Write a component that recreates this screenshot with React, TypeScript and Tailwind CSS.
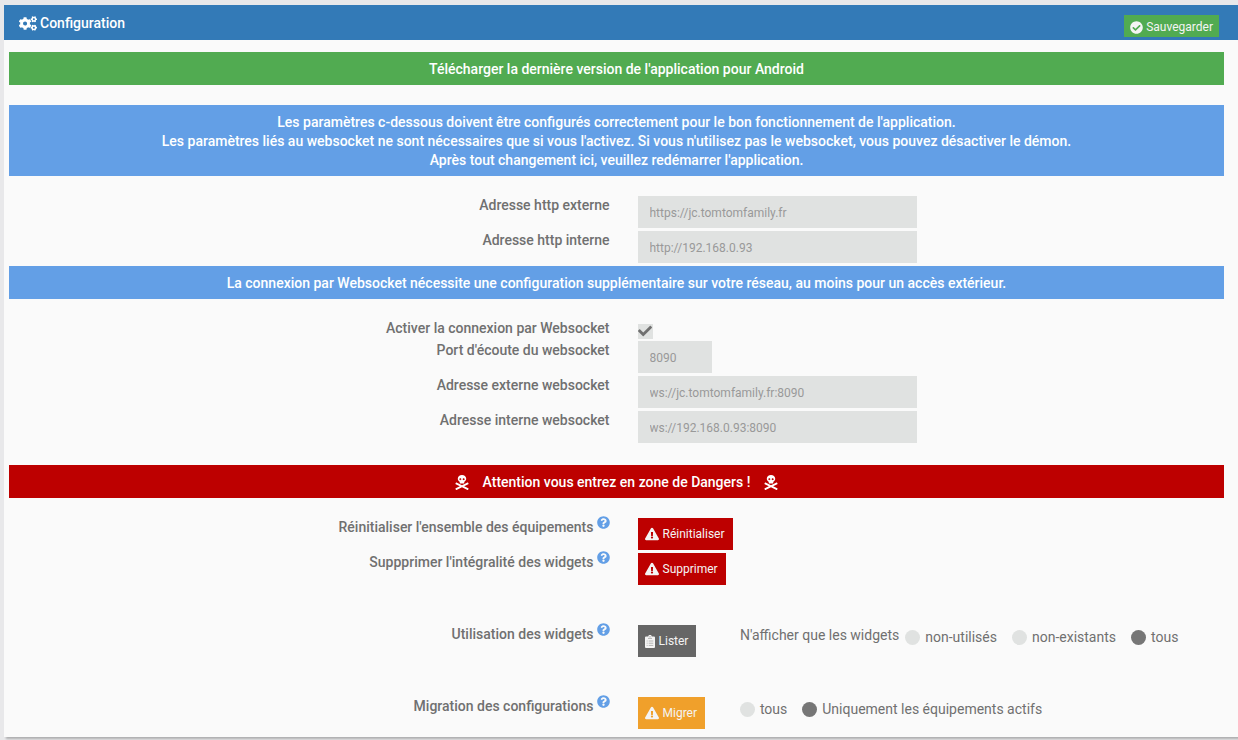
import type { ReactNode } from "react";
import {
  FaCheck,
  FaCheckCircle,
  FaCogs,
  FaExclamationTriangle,
  FaQuestionCircle,
  FaSkullCrossbones,
} from "react-icons/fa";

function ClipboardIcon() {
  return (
    <svg viewBox="0 0 10 13" className="h-[13px] w-2.5" aria-hidden="true">
      <path
        fill="currentColor"
        d="M1 1.6h2.3a1.7 1.7 0 0 1 3.4 0H9a1 1 0 0 1 1 1V12a1 1 0 0 1-1 1H1a1 1 0 0 1-1-1V2.6a1 1 0 0 1 1-1z"
      />
      <path stroke="#666" strokeOpacity="0.5" strokeWidth="0.9" d="M3 3.4h4M1.7 6h.9M3.7 6h4.6M1.7 8.2h.9M3.7 8.2h4.6M1.7 10.4h.9M3.7 10.4h4.6" />
      <circle cx="5" cy="1.7" r="0.5" fill="#666" />
    </svg>
  );
}

function Banner({ tone, children }: { tone: string; children: ReactNode }) {
  return (
    <div className={`mr-3.5 px-2 pt-2 pb-1.5 text-center font-medium text-white ${tone}`}>{children}</div>
  );
}

function Help({ title }: { title: string }) {
  return (
    <button type="button" aria-label={title} className="-mt-0.5 text-[#639fe6]">
      <FaQuestionCircle className="size-[13px]" />
    </button>
  );
}

function Row({
  label,
  htmlFor,
  help,
  children,
}: {
  label: string;
  htmlFor: string;
  help?: boolean;
  children: ReactNode;
}) {
  return (
    <div className="grid grid-cols-12">
      <div className="col-span-6 flex h-[19px] items-start justify-end gap-[3px] px-3.5 font-medium">
        <label htmlFor={htmlFor}>{label}</label>
        {help && <Help title={`Aide : ${label}`} />}
      </div>
      {children}
    </div>
  );
}

function TextField({ id, value, span }: { id: string; value: string; span: string }) {
  return (
    <div className={`px-3.5 ${span}`}>
      <input
        id={id}
        type="text"
        defaultValue={value}
        className="h-8 w-full bg-[#e0e2e1] px-3 pt-0.5 text-xs text-[#999] outline-none"
      />
    </div>
  );
}

function ActionButton({
  id,
  tone,
  icon,
  children,
}: {
  id: string;
  tone: string;
  icon: ReactNode;
  children: ReactNode;
}) {
  return (
    <div className="px-3.5">
      <button
        id={id}
        type="button"
        className={`flex h-8 items-center gap-[3px] px-2 text-xs whitespace-nowrap text-[#f4f4f4] ${tone}`}
      >
        <span className="-ml-px pr-px">{icon}</span>
        {children}
      </button>
    </div>
  );
}

function Radio({ name, label, checked }: { name: string; label: string; checked?: boolean }) {
  return (
    <label className="flex items-center gap-[5px] whitespace-nowrap">
      <input
        type="radio"
        name={name}
        defaultChecked={checked}
        className="size-[15px] appearance-none rounded-full bg-[#e0e2e1] checked:bg-[#767676]"
      />
      {label}
    </label>
  );
}

export default function App() {
  return (
    <div className="min-h-screen bg-[#e8e8ea] pt-[5px] pb-[3px] pl-1 font-[Roboto,sans-serif] text-sm leading-[19px] text-[#707070]">
      <main className="bg-[#fafafa] pb-2 shadow-[2px_2px_2px_rgba(0,0,0,0.25)]">
        <header className="flex h-[35px] items-start justify-between bg-[#337ab7] pr-[19px] pl-[15px] text-white">
          <h1 className="flex items-center gap-[3px] pt-[9px] font-medium">
            <FaCogs className="h-[15px] w-[18px]" />
            Configuration
          </h1>
          <button
            type="button"
            className="mt-2.5 flex h-[22px] items-center gap-[3px] bg-[#51ab51] px-1.5 pt-0.5 text-xs text-[#f4f4f4]"
          >
            <FaCheckCircle className="size-[13px]" />
            Sauvegarder
          </button>
        </header>

        <form className="pt-3 pl-[5px]">
          <Banner tone="bg-[#51ab51]">
            <a href="#android">Télécharger la dernière version de l'application pour Android</a>
          </Banner>

          <div className="mt-5">
            <Banner tone="bg-[#639fe6]">
              <p>Les paramètres c-dessous doivent être configurés correctement pour le bon fonctionnement de l'application.</p>
              <p>
                Les paramètres liés au websocket ne sont nécessaires que si vous l'activez. Si vous n'utilisez pas le
                websocket, vous pouvez désactiver le démon.
              </p>
              <p>Après tout changement ici, veuillez redémarrer l'application.</p>
            </Banner>
          </div>

          <div className="mt-5 mb-[3px] flex flex-col gap-[3px]">
            <Row label="Adresse http externe" htmlFor="http-ext">
              <TextField id="http-ext" value="https://jc.tomtomfamily.fr" span="col-span-3" />
            </Row>
            <Row label="Adresse http interne" htmlFor="http-int">
              <TextField id="http-int" value="http://192.168.0.93" span="col-span-3" />
            </Row>
          </div>

          <Banner tone="bg-[#639fe6]">
            La connexion par Websocket nécessite une configuration supplémentaire sur votre réseau, au moins pour un
            accès extérieur.
          </Banner>

          <div className="mt-5 flex flex-col gap-[3px]">
            <Row label="Activer la connexion par Websocket" htmlFor="ws-on">
              <div className="px-3.5 pt-[5px]">
                <div className="relative -mb-1 size-[15px]">
                  <input
                    id="ws-on"
                    type="checkbox"
                    defaultChecked
                    className="peer block size-[15px] appearance-none bg-[#e0e2e1]"
                  />
                  <FaCheck className="pointer-events-none absolute inset-0 hidden size-3.5 text-[#707070] peer-checked:block" />
                </div>
              </div>
            </Row>
            <Row label="Port d'écoute du websocket" htmlFor="ws-port">
              <TextField id="ws-port" value="8090" span="col-span-1" />
            </Row>
            <Row label="Adresse externe websocket" htmlFor="ws-ext">
              <TextField id="ws-ext" value="ws://jc.tomtomfamily.fr:8090" span="col-span-3" />
            </Row>
            <Row label="Adresse interne websocket" htmlFor="ws-int">
              <TextField id="ws-int" value="ws://192.168.0.93:8090" span="col-span-3" />
            </Row>
          </div>

          <div className="mt-[22px]">
            <Banner tone="bg-[#bd0000]">
              <span className="flex items-center justify-center gap-3.5">
                <FaSkullCrossbones className="h-[15px] w-3.5" />
                Attention vous entrez en zone de Dangers !
                <FaSkullCrossbones className="h-[15px] w-3.5" />
              </span>
            </Banner>
          </div>

          <div className="mt-5 flex flex-col gap-[3px]">
            <Row label="Réinitialiser l'ensemble des équipements" htmlFor="reset" help>
              <ActionButton id="reset" tone="bg-[#bd0000]" icon={<FaExclamationTriangle className="size-3.5" />}>
                Réinitialiser
              </ActionButton>
            </Row>
            <Row label="Suppprimer l'intégralité des widgets" htmlFor="delete" help>
              <ActionButton id="delete" tone="bg-[#bd0000]" icon={<FaExclamationTriangle className="size-3.5" />}>
                Supprimer
              </ActionButton>
            </Row>
          </div>

          <div className="mt-10 flex flex-col gap-10">
            <Row label="Utilisation des widgets" htmlFor="list" help>
              <ActionButton id="list" tone="bg-[#666666]" icon={<ClipboardIcon />}>
                Lister
              </ActionButton>
              <div className="col-span-5 flex items-start pl-3.5 whitespace-nowrap">
                <span className="pt-px">N'afficher que les widgets</span>
                <div className="ml-1.5 flex gap-[15px] pt-[3px]">
                  <Radio name="widgets" label="non-utilisés" />
                  <Radio name="widgets" label="non-existants" />
                  <Radio name="widgets" label="tous" checked />
                </div>
              </div>
            </Row>
            <Row label="Migration des configurations" htmlFor="migrate" help>
              <ActionButton id="migrate" tone="bg-[#f0a02b]" icon={<FaExclamationTriangle className="size-3.5" />}>
                Migrer
              </ActionButton>
              <div className="col-span-5 flex items-start gap-[15px] pt-[3px] pl-3.5">
                <Radio name="migration" label="tous" />
                <Radio name="migration" label="Uniquement les équipements actifs" checked />
              </div>
            </Row>
          </div>
        </form>
      </main>
    </div>
  );
}
